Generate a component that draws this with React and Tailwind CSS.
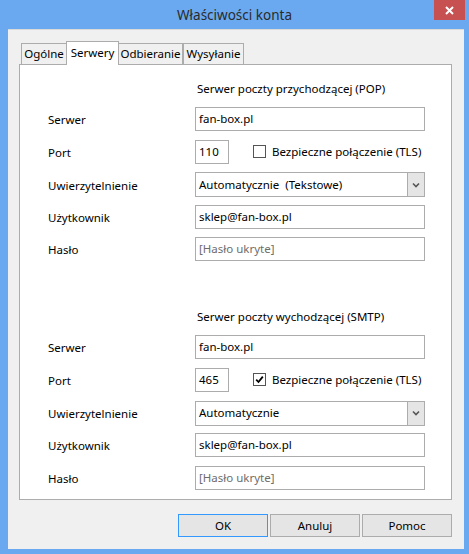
import { useState } from "react";

const font = { fontFamily: '"Noto Sans", "Open Sans", sans-serif' };

const Field = ({ label, children }) => (
	<div className="grid grid-cols-[147px_230px] items-center h-[24px]">
		<span className="text-black pt-[2px]">{label}</span>
		{children}
	</div>
);

const TextBox = ({ value, placeholder, width = "w-[230px]" }) => (
	<div className={`${width} h-[24px] border border-[#acacac] bg-white flex items-center px-[3px]`}>
		{value ? (
			<span className="text-black">{value}</span>
		) : (
			<span className="text-[#6d6d6d]">{placeholder}</span>
		)}
	</div>
);

const Select = ({ value }) => (
	<div className="w-[230px] h-[25px] border border-[#acacac] bg-white flex items-stretch">
		<span className="flex-1 flex items-center px-[3px] whitespace-pre text-black">{value}</span>
		<span className="w-[17px] border-l border-[#acacac] bg-[#e5e5e5] flex items-center justify-center">
			<svg width="8" height="6" viewBox="0 0 8 6">
				<path d="M1 1.5 L4 4.5 L7 1.5" fill="none" stroke="#555" strokeWidth="1.6" />
			</svg>
		</span>
	</div>
);

const Checkbox = ({ checked, label }) => (
	<div className="flex items-center ml-[24px] whitespace-nowrap">
		<span className="w-[13px] h-[13px] border border-[#555] bg-white flex items-center justify-center">
			{checked && (
				<svg width="9" height="9" viewBox="0 0 9 9">
					<path d="M1.2 4.6 L3.5 7 L7.8 1.6" fill="none" stroke="#000" strokeWidth="1.8" />
				</svg>
			)}
		</span>
		<span className="ml-[6px] text-black">{label}</span>
	</div>
);

const Section = ({ title, port, tls, auth, top }) => (
	<div className="flex flex-col">
		<div className={`${top} mb-[11px] h-[16px] leading-[16px] pt-[1px] pl-[149px] text-black whitespace-nowrap`}>{title}</div>
		<div className="flex flex-col gap-[8.6px]">
			<Field label="Serwer">
				<TextBox value="fan-box.pl" />
			</Field>
			<Field label="Port">
				<div className="flex items-center">
					<TextBox value={port} width="w-[34px]" />
					<Checkbox checked={tls} label="Bezpieczne połączenie (TLS)" />
				</div>
			</Field>
			<Field label="Uwierzytelnienie">
				<Select value={auth} />
			</Field>
			<Field label="Użytkownik">
				<TextBox value="sklep@fan-box.pl" />
			</Field>
			<Field label="Hasło">
				<TextBox placeholder="[Hasło ukryte]" />
			</Field>
		</div>
	</div>
);

const tabs = [
	{ name: "Ogólne", w: "w-[46px]" },
	{ name: "Serwery", w: "w-[53px]" },
	{ name: "Odbieranie", w: "w-[65px]" },
	{ name: "Wysyłanie", w: "w-[61px]" },
];

export default function App() {
	const [active] = useState(1);

	return (
		<div className="w-[469px] h-[554px] bg-[#6aa9f0] flex flex-col text-[11.5px] leading-[16px]" style={font}>
			<div className="relative h-[29px] flex items-center justify-center">
				<span className="text-[13.5px] text-[#2b2b2b] mt-[1px]">Właściwości konta</span>
				<div className="absolute top-0 right-[4px] w-[31px] h-[20px] bg-[#c75050] flex items-center justify-center">
					<svg width="9" height="9" viewBox="0 0 9 9">
						<path d="M1 1 L8 8 M8 1 L1 8" stroke="#fff" strokeWidth="2" />
					</svg>
				</div>
			</div>

			<div className="ml-[8px] mr-[5px] h-[520px] bg-[#f0f0f0] border-t border-[#dadada] pl-[11px] pr-[12px] pt-[11px] flex flex-col">
				<div className="flex items-end h-[24px] pl-[2px] relative z-10">
					{tabs.map((t, i) =>
						i === active ? (
							<div
								key={t.name}
								className={`${t.w} -ml-[1px] -mr-[1px] h-[24px] bg-white border border-b-0 border-[#acacac] flex items-center justify-center pb-[2px] text-black`}
							>
								{t.name}
							</div>
						) : (
							<div
								key={t.name}
								className={`${t.w} h-[21px] mb-[1px] bg-[#f0f0f0] border border-b-0 border-[#acacac] flex items-center justify-center text-black`}
							>
								{t.name}
							</div>
						)
					)}
				</div>

				<div className="-mt-[1px] w-[433px] h-[436px] bg-white border border-[#acacac] pl-[28px] flex flex-col">
					<Section title="Serwer poczty przychodzącej (POP)" port="110" tls={false} auth="Automatycznie  (Tekstowe)" top="mt-[15px]" />
					<Section title="Serwer poczty wychodzącej (SMTP)" port="465" tls={true} auth="Automatycznie" top="mt-[47px]" />
				</div>

				<div className="flex justify-end gap-[2px] mt-[14px]">
					<button className="w-[90px] h-[23px] bg-[#e5e5e5] border border-[#3399ff] text-black">OK</button>
					<button className="w-[90px] h-[23px] bg-[#e5e5e5] border border-[#acacac] text-black">Anuluj</button>
					<button className="w-[90px] h-[23px] bg-[#e5e5e5] border border-[#acacac] text-black">Pomoc</button>
				</div>
			</div>
		</div>
	);
}
